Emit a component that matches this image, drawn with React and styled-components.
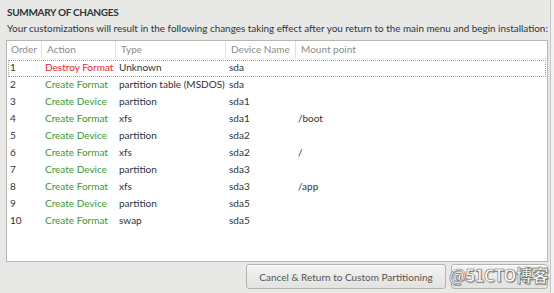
import React from 'react';
import styled, { createGlobalStyle } from 'styled-components';

const GlobalStyle = createGlobalStyle`
  html, body {
    margin: 0;
    padding: 0;
    background: #f2f2f1;
  }
  * { box-sizing: border-box; }
`;

const Window = styled.div`
  width: 551px;
  height: 293px;
  background: #e8e8e7;
  border-right: 1px solid #c4c4c2;
  padding: 5px 3px 0 6px;
  display: flex;
  flex-direction: column;
  font-family: Lato, "Noto Sans", sans-serif;
  color: #2e3436;
  position: relative;
  overflow: hidden;
`;

const Title = styled.h2`
  margin: 0 0 0 1px;
  font-size: 10px;
  font-weight: 700;
  line-height: 14px;
  letter-spacing: -0.3px;
  color: #2e3436;
`;

const Subtitle = styled.p`
  margin: 2px 0 0 1px;
  font-size: 9.9px;
  line-height: 14px;
  color: #2e3436;
  white-space: nowrap;
`;

const Table = styled.div`
  margin-top: 5px;
  width: 542px;
  height: 222px;
  background: #fff;
  border: 1px solid #b6b6b3;
  display: flex;
  flex-direction: column;
`;

const cols = '34px 74px 110px 70px 1fr';

const HeaderRow = styled.div`
  display: grid;
  grid-template-columns: ${cols};
  height: 18px;
  border-bottom: 1px solid #eeeeec;
`;

const HeaderCell = styled.div`
  font-size: 10px;
  line-height: 17px;
  color: #8c8c8a;
  padding-left: ${(p) => p.$pad || 4}px;
  border-left: ${(p) => (p.$first ? 'none' : '1px solid #e2e2e0')};
  white-space: nowrap;
`;

const Body = styled.div`
  padding-top: 1px;
`;

const Row = styled.div`
  display: grid;
  grid-template-columns: ${cols};
  height: 17px;
  margin: 0 1px;
  border: 1px dotted ${(p) => (p.$focus ? '#9a9a98' : 'transparent')};
`;

const Cell = styled.div`
  font-size: 10px;
  line-height: 13px;
  padding-left: ${(p) => p.$pad ?? 2}px;
  color: ${(p) => p.$color || '#2e3436'};
  white-space: nowrap;
`;

const Actions = styled.div`
  display: flex;
  justify-content: flex-end;
  gap: 5px;
  margin-top: 2px;
  width: 542px;
`;

const Button = styled.button`
  height: 25px;
  width: ${(p) => p.$w}px;
  border: 1px solid #b4b4b1;
  border-radius: 3px;
  background: linear-gradient(#f4f4f3, #e2e2e0);
  font-family: Lato, "Noto Sans", sans-serif;
  font-size: 10px;
  color: #555753;
  padding: 0;
  box-shadow: inset 0 1px 0 #fff;
`;

const Watermark = styled.div`
  position: absolute;
  left: 449px;
  top: 263px;
  font-family: "Noto Sans CJK SC", "Noto Sans", sans-serif;
  font-size: 17px;
  font-weight: 700;
  line-height: 24px;
  white-space: nowrap;
  color: #fff;
  letter-spacing: -0.8px;
  -webkit-text-stroke: 0.6px #6e6e6e;
  text-shadow: 1px 1px 1px rgba(0, 0, 0, 0.35);
`;

const RED = '#ef2525';
const GREEN = '#3a9a2a';

const changes = [
  [1, 'Destroy Format', 'Unknown', 'sda', ''],
  [2, 'Create Format', 'partition table (MSDOS)', 'sda', ''],
  [3, 'Create Device', 'partition', 'sda1', ''],
  [4, 'Create Format', 'xfs', 'sda1', '/boot'],
  [5, 'Create Device', 'partition', 'sda2', ''],
  [6, 'Create Format', 'xfs', 'sda2', '/'],
  [7, 'Create Device', 'partition', 'sda3', ''],
  [8, 'Create Format', 'xfs', 'sda3', '/app'],
  [9, 'Create Device', 'partition', 'sda5', ''],
  [10, 'Create Format', 'swap', 'sda5', ''],
];

const App = () => (
  <>
    <GlobalStyle />
    <Window>
      <Title>SUMMARY OF CHANGES</Title>
      <Subtitle>
        Your customizations will result in the following changes taking effect after you return to the main menu and begin installation:
      </Subtitle>
      <Table>
        <HeaderRow>
          <HeaderCell $first $pad={4}>Order</HeaderCell>
          <HeaderCell $pad={5}>Action</HeaderCell>
          <HeaderCell $pad={5}>Type</HeaderCell>
          <HeaderCell $pad={5}>Device Name</HeaderCell>
          <HeaderCell $pad={5}>Mount point</HeaderCell>
        </HeaderRow>
        <Body>
          {changes.map(([order, action, type, device, mount], i) => (
            <Row key={order} $focus={i === 0}>
              <Cell $pad={1}>{order}</Cell>
              <Cell $color={action.startsWith('Destroy') ? RED : GREEN}>{action}</Cell>
              <Cell>{type}</Cell>
              <Cell>{device}</Cell>
              <Cell $pad={1}>{mount}</Cell>
            </Row>
          ))}
        </Body>
      </Table>
      <Actions>
        <Button $w={200}>Cancel &amp; Return to Custom Partitioning</Button>
        <Button $w={97} aria-label="Accept Changes" />
      </Actions>
      <Watermark>@51CTO博客</Watermark>
    </Window>
  </>
);

export default App;
